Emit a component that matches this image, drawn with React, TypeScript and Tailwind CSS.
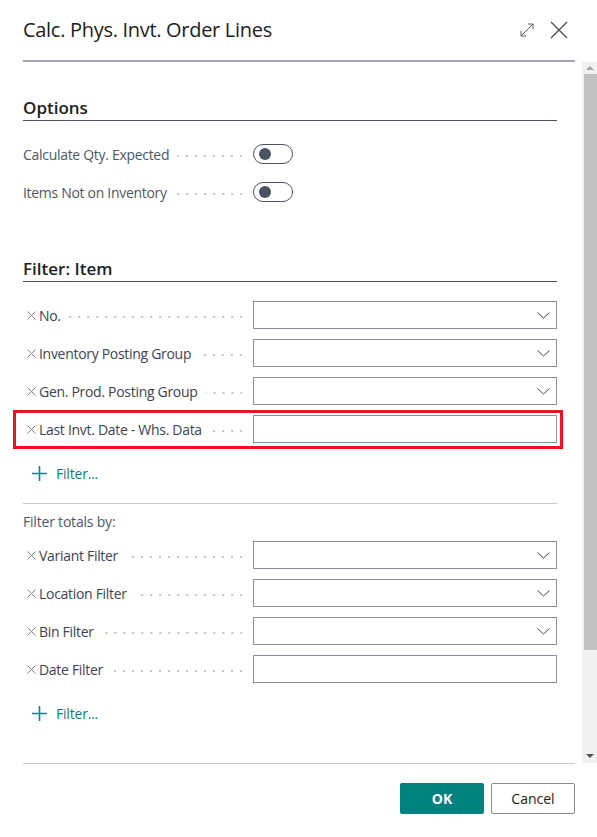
import { ReactNode } from "react";

const dots =
  "flex-1 h-[2px] mt-[4px] ml-[8px] mr-[11px] bg-[linear-gradient(to_left,#c4c4c4_2px,transparent_2px)] bg-[length:9px_2px] bg-repeat-x bg-right";

function Toggle() {
  return (
    <div className="w-[40px] h-[20px] rounded-full border border-[#4b5262] flex items-center pl-[5px]">
      <div className="w-[12px] h-[12px] rounded-full bg-[#4b5262]" />
    </div>
  );
}

function ToggleRow({ label }: { label: string }) {
  return (
    <div className="h-[38px] flex items-center">
      <div className="w-[230px] flex items-center">
        <span className="text-[14px] tracking-[-0.3px] text-[#4f5766] whitespace-nowrap">{label}</span>
        <div className={dots} />
      </div>
      <Toggle />
    </div>
  );
}

function Chevron() {
  return (
    <svg width="13" height="7" viewBox="0 0 13 7" fill="none">
      <path d="M0.5 0.5 L6.5 6 L12.5 0.5" stroke="#3e4657" strokeWidth="1" />
    </svg>
  );
}

function FieldRow({ label, select = true, children }: { label: string; select?: boolean; children?: ReactNode }) {
  return (
    <div className="relative h-[38px] flex items-center">
      <div className="w-[230px] flex items-center">
        <svg width="9" height="9" viewBox="0 0 9 9" className="ml-[4px] mr-[3px] shrink-0">
          <path d="M0.5 0.5 L8.5 8.5 M8.5 0.5 L0.5 8.5" stroke="#80858e" strokeWidth="1" />
        </svg>
        <span className="text-[14px] tracking-[-0.3px] text-[#3e4450] whitespace-nowrap">{label}</span>
        <div className={dots} />
      </div>
      <div className="flex-1 h-[28px] border border-[#8b909c] bg-white flex items-center justify-end pr-[6px]">
        {select && <Chevron />}
      </div>
      {children}
    </div>
  );
}

function AddFilter() {
  return (
    <div className="h-[38px] flex items-center pl-[9px] gap-[9px]">
      <svg width="15" height="15" viewBox="0 0 15 15">
        <path d="M7.5 0 V15 M0 7.5 H15" stroke="#0b878b" strokeWidth="1.6" />
      </svg>
      <span className="text-[14px] tracking-[-0.2px] text-[#0b7f84]">Filter...</span>
    </div>
  );
}

function SectionHeader({ title }: { title: string }) {
  return (
    <div className="h-[25px] border-b border-[#4b5262] text-[17px] leading-[24px] font-semibold text-[#212121]">
      {title}
    </div>
  );
}

export default function App() {
  return (
    <div className="w-[597px] h-[837px] bg-white flex flex-col overflow-hidden font-['Open_Sans','Noto_Sans',sans-serif]">
      {/* header */}
      <div className="h-[60px] flex items-center justify-between pl-[23px] pr-[29px]">
        <h1 className="text-[20px] text-[#212121] tracking-[-0.3px]">Calc. Phys. Invt. Order Lines</h1>
        <div className="flex items-center gap-[15px]">
          <svg width="16" height="16" viewBox="0 0 16 16" fill="none" stroke="#5a5a5a" strokeWidth="1">
            <path d="M2 14 L14 2 M9 2 H14 V7 M2 9 V14 H7" />
          </svg>
          <svg width="18" height="18" viewBox="0 0 18 18" fill="none" stroke="#505050" strokeWidth="1.4">
            <path d="M1 1 L17 17 M17 1 L1 17" />
          </svg>
        </div>
      </div>
      <div className="ml-[23px] mr-[22px] h-[2px] bg-[#a2a6b2]" />

      {/* body */}
      <div className="flex h-[701px]">
        <div className="flex-1 pl-[23px] pr-[25px] pt-[34px] overflow-hidden">
          <SectionHeader title="Options" />
          <div className="mt-[14px]">
            <ToggleRow label="Calculate Qty. Expected" />
            <ToggleRow label="Items Not on Inventory" />
          </div>

          <div className="mt-[46px]">
            <SectionHeader title="Filter: Item" />
          </div>
          <div className="mt-[14px]">
            <FieldRow label="No." />
            <FieldRow label="Inventory Posting Group" />
            <FieldRow label="Gen. Prod. Posting Group" />
            <FieldRow label="Last Invt. Date - Whs. Data" select={false}>
              <div className="absolute -left-[10px] -right-[6px] top-0 -bottom-[1px] border-[3px] border-[#e8141f] pointer-events-none" />
            </FieldRow>
          </div>
          <div className="mt-[6px]">
            <AddFilter />
          </div>
          <div className="mt-[11px] h-px bg-[#c9c9c9]" />

          <div className="mt-[8px] text-[14px] leading-[20px] tracking-[-0.2px] text-[#505866]">Filter totals by:</div>
          <div className="mt-[4px]">
            <FieldRow label="Variant Filter" />
            <FieldRow label="Location Filter" />
            <FieldRow label="Bin Filter" />
            <FieldRow label="Date Filter" select={false} />
          </div>
          <div className="mt-[6px]">
            <AddFilter />
          </div>
        </div>

        {/* scrollbar */}
        <div className="w-[15px] bg-[#f1f1f1] flex flex-col items-center">
          <div className="h-[12px] flex items-center justify-center">
            <div className="w-0 h-0 border-l-[4px] border-r-[4px] border-b-[4px] border-l-transparent border-r-transparent border-b-[#a3a3a3]" />
          </div>
          <div className="self-end w-[13px] h-[576px] bg-[#c1c1c1]" />
          <div className="flex-1" />
          <div className="h-[14px] flex items-center justify-center">
            <div className="w-0 h-0 border-l-[4px] border-r-[4px] border-t-[4px] border-l-transparent border-r-transparent border-t-[#505050]" />
          </div>
        </div>
      </div>
      <div className="ml-[23px] mr-[22px] h-px bg-[#c9c9c9]" />

      {/* footer */}
      <div className="flex justify-end gap-[7px] pr-[22px] pt-[19px]">
        <button className="w-[84px] h-[31px] rounded-[2px] bg-[#00817f] text-white text-[14px] font-bold">OK</button>
        <button className="w-[84px] h-[31px] rounded-[2px] border border-[#8a8a8a] bg-white text-[#212121] text-[14px]">
          Cancel
        </button>
      </div>
    </div>
  );
}
